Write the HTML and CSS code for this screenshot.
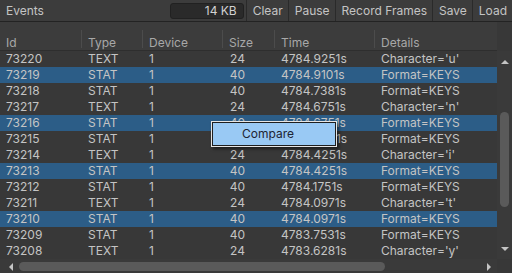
FILE: index.html
```html
<!DOCTYPE html>
<html lang="en">

<head>
    <meta charset="UTF-8">
    <meta name="viewport" content="width=device-width, initial-scale=1.0">
    <title>Events</title>
    <link rel="stylesheet" href="styles.css">
</head>

<body>
    <div id="window">
        <!-- Toolbar -->
        <div id="toolbar">
            <span class="title">Events</span>
            <div class="size-field">14 KB</div>
            <button class="tool-btn">Clear</button>
            <button class="tool-btn">Pause</button>
            <button class="tool-btn">Record Frames</button>
            <button class="tool-btn">Save</button>
            <button class="tool-btn">Load</button>
        </div>

        <!-- Column headers -->
        <div id="header" class="cols">
            <div class="hcell">Id</div>
            <div class="hcell">Type</div>
            <div class="hcell">Device</div>
            <div class="hcell">Size</div>
            <div class="hcell">Time</div>
            <div class="hcell last">Details</div>
        </div>

        <!-- List + vertical scrollbar -->
        <div id="body">
            <div id="rows"></div>
            <div id="vscroll">
                <span class="arrow up"></span>
                <div class="vtrack"><div class="vthumb"></div></div>
                <span class="arrow down"></span>
            </div>
        </div>

        <!-- Horizontal scrollbar -->
        <div id="hscroll">
            <div class="hbar">
                <span class="arrow left"></span>
                <div class="hthumb"></div>
                <span class="arrow right"></span>
            </div>
            <div class="corner"></div>
        </div>

        <!-- Context menu -->
        <div id="context-menu">
            <div class="menu-item">Compare</div>
        </div>
    </div>

    <script>
        const events = [
            ['73220', 'TEXT', '1', '24', '4784.9251s', "Character='u'", false],
            ['73219', 'STAT', '1', '40', '4784.9101s', 'Format=KEYS', true],
            ['73218', 'STAT', '1', '40', '4784.7381s', 'Format=KEYS', false],
            ['73217', 'TEXT', '1', '24', '4784.6751s', "Character='n'", false],
            ['73216', 'STAT', '1', '40', '4784.6751s', 'Format=KEYS', true],
            ['73215', 'STAT', '1', '40', '4784.4251s', 'Format=KEYS', false],
            ['73214', 'TEXT', '1', '24', '4784.4251s', "Character='i'", false],
            ['73213', 'STAT', '1', '40', '4784.4251s', 'Format=KEYS', true],
            ['73212', 'STAT', '1', '40', '4784.1751s', 'Format=KEYS', false],
            ['73211', 'TEXT', '1', '24', '4784.0971s', "Character='t'", false],
            ['73210', 'STAT', '1', '40', '4784.0971s', 'Format=KEYS', true],
            ['73209', 'STAT', '1', '40', '4783.7531s', 'Format=KEYS', false],
            ['73208', 'TEXT', '1', '24', '4783.6281s', "Character='y'", false]
        ];

        const rows = document.getElementById('rows');
        events.forEach(ev => {
            const row = document.createElement('div');
            row.className = 'row cols' + (ev[6] ? ' selected' : '');
            row.innerHTML =
                `<div class="cell">${ev[0]}</div>` +
                `<div class="cell">${ev[1]}</div>` +
                `<div class="cell">${ev[2]}</div>` +
                `<div class="cell num">${ev[3]}</div>` +
                `<div class="cell">${ev[4]}</div>` +
                `<div class="cell">${ev[5]}</div>`;
            rows.appendChild(row);
        });
    </script>
</body>

</html>
```

FILE: styles.css
```css
body {
    margin: 0;
    padding: 0;
    background-color: #383838;
    font-family: Inter, "Liberation Sans", sans-serif;
    font-size: 12px;
    color: #c4c4c4;
    overflow: hidden;
}

#window {
    width: 512px;
    height: 273px;
    display: flex;
    flex-direction: column;
    position: relative;
    overflow: hidden;
}

/* Toolbar */
#toolbar {
    height: 21px;
    display: flex;
    align-items: stretch;
    background-color: #3c3c3c;
    border-bottom: 1px solid #232323;
    flex-shrink: 0;
}

#toolbar .title {
    flex-grow: 1;
    padding-left: 6px;
    line-height: 22px;
    font-size: 12px;
}

.size-field {
    width: 66px;
    margin: 3px 2px 2px 0;
    padding-right: 6px;
    background-color: #2a2a2a;
    border: 1px solid #212121;
    border-radius: 3px;
    text-align: right;
    line-height: 14px;
    color: #d2d2d2;
}

.tool-btn {
    background-color: #3c3c3c;
    color: #c4c4c4;
    border: none;
    border-left: 1px solid #2a2a2a;
    font-family: inherit;
    font-size: 12px;
    padding: 0 5px 0 6px;
    margin: 0;
    line-height: 20px;
}

/* Columns */
.cols {
    display: grid;
    grid-template-columns: 82px 61px 80px 52px 100px 1fr;
}

#header {
    height: 28px;
    background-color: #3c3c3c;
    border-bottom: 1px solid #2e2e2e;
    flex-shrink: 0;
    margin-right: 15px;
}

.hcell {
    position: relative;
    padding-left: 6px;
    padding-top: 14px;
    line-height: 14px;
    color: #a8a8a8;
}

.hcell::after {
    content: "";
    position: absolute;
    right: 0;
    top: 8px;
    bottom: 2px;
    width: 1px;
    background-color: #4c4c4c;
}

.hcell.last::after {
    display: none;
}

#body {
    display: flex;
    height: 208px;
    flex-shrink: 0;
}

#rows {
    flex-grow: 1;
}

.row {
    height: 16px;
    line-height: 16px;
}

.row.selected {
    background-color: #2c5d87;
}

.cell {
    padding-left: 6px;
    white-space: nowrap;
    overflow: hidden;
}

.cell.num {
    text-align: right;
    padding-right: 30px;
}

/* Scrollbars */
#vscroll {
    width: 15px;
    background-color: #3a3a3a;
    display: flex;
    flex-direction: column;
    align-items: center;
}

.vtrack {
    flex-grow: 1;
    width: 100%;
    display: flex;
    flex-direction: column;
    align-items: center;
}

.vthumb {
    width: 9px;
    height: 95px;
    margin-top: 48px;
    background-color: #5a5a5a;
    border-radius: 5px;
}

.arrow {
    width: 0;
    height: 0;
    display: block;
}

.arrow.up {
    margin-top: 9px;
    border-left: 4px solid transparent;
    border-right: 4px solid transparent;
    border-bottom: 4px solid #c4c4c4;
}

.arrow.down {
    margin-bottom: 8px;
    border-left: 4px solid transparent;
    border-right: 4px solid transparent;
    border-top: 4px solid #c4c4c4;
}

#hscroll {
    height: 15px;
    display: flex;
    flex-shrink: 0;
}

.hbar {
    flex-grow: 1;
    background-color: #3a3a3a;
    display: flex;
    align-items: center;
    padding: 0 6px 0 9px;
}

.hthumb {
    width: 366px;
    height: 9px;
    margin-left: 6px;
    background-color: #5a5a5a;
    border-radius: 5px;
}

.arrow.left {
    border-top: 4px solid transparent;
    border-bottom: 4px solid transparent;
    border-right: 4px solid #c4c4c4;
}

.arrow.right {
    margin-left: auto;
    border-top: 4px solid transparent;
    border-bottom: 4px solid transparent;
    border-left: 4px solid #c4c4c4;
}

.corner {
    width: 15px;
    background-color: #383838;
}

/* Context menu */
#context-menu {
    position: absolute;
    left: 211px;
    top: 121px;
    width: 122px;
    padding: 1px;
    background-color: #1e1e1e;
    border: 1px solid #e6e6e6;
    box-shadow: 2px 2px 3px rgba(0, 0, 0, 0.5);
}

.menu-item {
    background-color: #99c9f4;
    color: #1d2433;
    height: 22px;
    line-height: 22px;
    padding-left: 29px;
    font-size: 12px;
}
```
